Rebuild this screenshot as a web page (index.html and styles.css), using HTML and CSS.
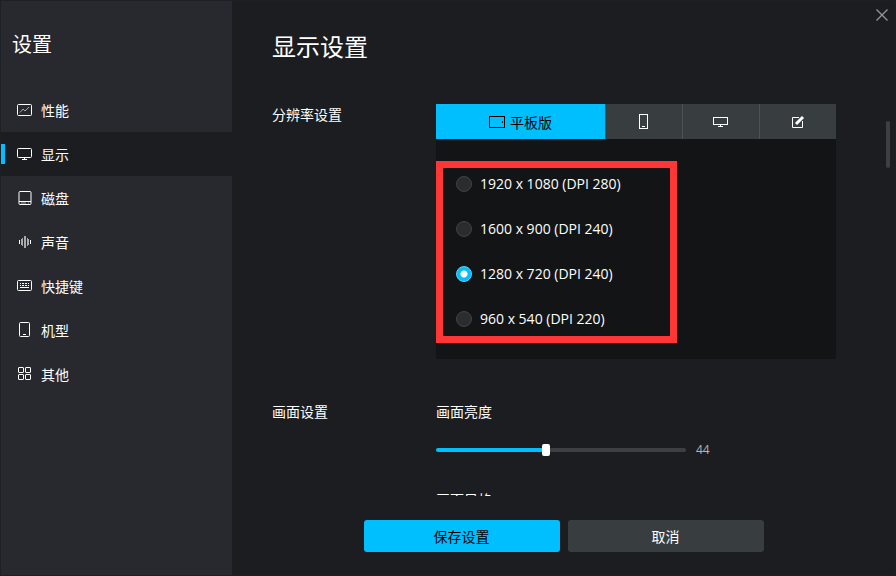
FILE: index.html
```html
<!DOCTYPE html>
<html lang="zh-CN">

<head>
    <meta charset="UTF-8">
    <meta name="viewport" content="width=device-width, initial-scale=1.0">
    <title>设置</title>
    <link rel="stylesheet" href="styles.css">
</head>

<body>
    <div class="window">
        <aside class="sidebar">
            <h1 class="sidebar-title">设置</h1>
            <nav class="menu">
                <a class="menu-item" href="#performance">
                    <svg class="icon" viewBox="0 0 16 16">
                        <rect x="0.5" y="2.5" width="14" height="11" rx="1" />
                        <path class="thin" d="M3 10.5L6 7l2 2 4-4" />
                    </svg>
                    <span>性能</span>
                </a>
                <a class="menu-item active" href="#display">
                    <svg class="icon" viewBox="0 0 16 16">
                        <rect x="0.5" y="2.5" width="14" height="9" rx="1" />
                        <path d="M7.5 12v1M5 13.5h5" />
                    </svg>
                    <span>显示</span>
                </a>
                <a class="menu-item" href="#disk">
                    <svg class="icon" viewBox="0 0 16 16">
                        <rect x="2" y="1.5" width="12" height="13" rx="1" />
                        <path d="M2 11.5h12" />
                        <path class="thin" d="M4 13h5M11 13h1" />
                    </svg>
                    <span>磁盘</span>
                </a>
                <a class="menu-item" href="#sound">
                    <svg class="icon" viewBox="0 0 16 16">
                        <path class="wave" d="M8 2v12" />
                        <path class="thin" d="M5.500 4v8M10.500 4v8M4.500 5v6M11.500 5v6" />
                        <path d="M2.500 6v4M13.500 6v4" />
                    </svg>
                    <span>声音</span>
                </a>
                <a class="menu-item" href="#shortcuts">
                    <svg class="icon" viewBox="0 0 16 16">
                        <rect x="0.5" y="2.5" width="14" height="10" rx="1" />
                        <path d="M3 5.5h1M5 5.5h2M8 5.5h2M11 5.5h1M3 7.5h1M5 7.5h2M8 7.5h2M11 7.5h1M3 9.5h9" />
                    </svg>
                    <span>快捷键</span>
                </a>
                <a class="menu-item" href="#model">
                    <svg class="icon" viewBox="0 0 16 16">
                        <rect x="2.5" y="0.5" width="10" height="14" rx="1" />
                        <path d="M6 12.5h3" />
                    </svg>
                    <span>机型</span>
                </a>
                <a class="menu-item" href="#other">
                    <svg class="icon" viewBox="0 0 16 16">
                        <rect x="1.5" y="1.5" width="5" height="5" rx="0.5" />
                        <rect x="8.5" y="1.5" width="5" height="5" rx="0.5" />
                        <rect x="1.5" y="8.5" width="5" height="5" rx="0.5" />
                        <rect x="8.5" y="8.5" width="5" height="5" rx="0.5" />
                    </svg>
                    <span>其他</span>
                </a>
            </nav>
        </aside>

        <main class="main">
            <button class="close" type="button" aria-label="关闭">
                <svg viewBox="0 0 12 12">
                    <path d="M0.5 0.5l11 11M11.5 0.5l-11 11" />
                </svg>
            </button>
            <div class="scrollbar"></div>

            <h2 class="main-title">显示设置</h2>

            <div class="content">
                <section class="setting">
                    <h3 class="label">分辨率设置</h3>
                    <div class="resolution">
                        <div class="tabs" role="tablist">
                            <button class="tab selected" type="button" role="tab" aria-selected="true">
                                <svg class="icon" viewBox="0 0 16 16">
                                    <rect x="0.5" y="2.5" width="15" height="11" />
                                    <path d="M13.5 7v2" />
                                </svg>
                                <span>平板版</span>
                            </button>
                            <button class="tab" type="button" role="tab" aria-label="手机版">
                                <svg class="icon" viewBox="0 0 16 16">
                                    <rect x="3.5" y="0.5" width="8" height="14" />
                                    <path d="M6 12.5h3" />
                                </svg>
                            </button>
                            <button class="tab" type="button" role="tab" aria-label="超宽屏">
                                <svg class="icon" viewBox="0 0 16 16">
                                    <rect x="0.5" y="3.5" width="14" height="7" />
                                    <path d="M7.5 11v2M5 12.5h5" />
                                </svg>
                            </button>
                            <button class="tab" type="button" role="tab" aria-label="自定义">
                                <svg class="icon" viewBox="0 0 16 16">
                                    <path d="M9 3.5H2.5v10h10V7" />
                                    <path class="pen" d="M6 10L13 3" />
                                </svg>
                            </button>
                        </div>
                        <div class="panel">
                            <div class="options" role="radiogroup" aria-label="分辨率">
                                <label class="option"><input type="radio" name="resolution"><span>1920 x 1080 (DPI 280)</span></label>
                                <label class="option"><input type="radio" name="resolution"><span>1600 x 900 (DPI 240)</span></label>
                                <label class="option"><input type="radio" name="resolution" checked><span>1280 x 720 (DPI 240)</span></label>
                                <label class="option"><input type="radio" name="resolution"><span>960 x 540 (DPI 220)</span></label>
                            </div>
                        </div>
                    </div>
                </section>

                <section class="setting">
                    <h3 class="label">画面设置</h3>
                    <div class="picture">
                        <label class="label" for="brightness">画面亮度</label>
                        <div class="slider">
                            <input id="brightness" type="range" min="0" max="100" value="44">
                            <output for="brightness">44</output>
                        </div>
                        <div class="label">画面风格</div>
                    </div>
                </section>
            </div>

            <div class="footer">
                <button class="btn save" type="button">保存设置</button>
                <button class="btn" type="button">取消</button>
            </div>
        </main>
    </div>

    <script>
        let brightness = document.querySelector("#brightness");
        let brightnessValue = document.querySelector(".slider output");

        brightness.addEventListener("input", (e) => {
            brightnessValue.textContent = e.target.value;
            e.target.style.setProperty("--value", e.target.value + "%");
        });
    </script>
</body>

</html>
```
FILE: styles.css
```css
* {
    box-sizing: border-box;
    padding: 0;
    margin: 0;
}

body {
    font-family: "Open Sans", "Noto Sans CJK SC", sans-serif;
    font-size: 14px;
    line-height: 22px;
    color: #fff;
    background-color: #1c1d20;
}

button,
input {
    font: inherit;
    color: inherit;
    border: none;
}

button {
    cursor: pointer;
}

.window {
    display: flex;
    height: 100vh;
    border: 1px solid #1b2026;
}

/* sidebar */
.sidebar {
    flex: none;
    width: 231px;
    background-color: #28292e;
}

.sidebar-title {
    padding: 28px 11px;
    font-size: 20px;
    font-weight: 400;
    line-height: 31px;
}

.menu-item {
    display: flex;
    align-items: center;
    gap: 8px;
    height: 44px;
    padding-left: 16px;
    color: #fff;
    text-decoration: none;
}

.menu-item span,
.tab span {
    padding-top: 2px;
}

.menu-item.active {
    padding-left: 0;
    background-color: #1c1d20;
}

.menu-item.active::before {
    content: "";
    width: 4px;
    height: 20px;
    margin-right: 4px;
    background-color: #00bfff;
}

.icon {
    flex: none;
    width: 16px;
    height: 16px;
    fill: none;
    stroke: currentColor;
}

.icon .thin {
    opacity: 0.6;
}

.icon .wave {
    stroke-width: 2;
    opacity: 0.6;
}

.icon .pen {
    stroke-width: 3;
}

/* main area */
.main {
    position: relative;
    flex: 1;
    min-width: 0;
    display: flex;
    flex-direction: column;
}

.close {
    position: absolute;
    top: 8px;
    right: 7px;
    width: 12px;
    height: 12px;
    background: none;
}

.close svg {
    display: block;
    fill: none;
    stroke: #96979a;
    stroke-width: 1.3;
}

.scrollbar {
    position: absolute;
    top: 120px;
    right: 5px;
    width: 4px;
    height: 47px;
    border-radius: 2px;
    background-color: #3e3f42;
}

.main-title {
    padding: 29px 40px 41px;
    font-size: 24px;
    font-weight: 400;
    line-height: 33px;
}

.content {
    flex: 1;
    min-height: 0;
    padding: 0 59px 0 40px;
    overflow-y: auto;
    scrollbar-width: none;
}

.setting {
    display: grid;
    grid-template-columns: 164px 1fr;
    margin-bottom: 42px;
}

.label {
    display: block;
    font-size: 14px;
    font-weight: 400;
}

.tabs {
    display: grid;
    grid-template-columns: 169fr 77fr 77fr 77fr;
    height: 35px;
}

.tab {
    display: flex;
    align-items: center;
    justify-content: center;
    gap: 5px;
    border-left: 1px solid #4e5255;
    background-color: #383d40;
}

.tab.selected {
    border-left: none;
    color: #000;
    background-color: #00bfff;
}

.panel {
    padding: 22px 0 16px;
    background-color: #131416;
}

.options {
    display: flex;
    flex-direction: column;
    gap: 13px;
    width: 241px;
    padding: 0 0 1px 13px;
    border: 7px solid #ff3636;
}

.option {
    display: flex;
    align-items: center;
    gap: 8px;
    height: 32px;
}

.option input {
    appearance: none;
    width: 16px;
    height: 16px;
    border: 1px solid #424346;
    border-radius: 50%;
    background-color: #2b2c2e;
}

.option input:checked {
    border-color: #5fd3fa;
    background: radial-gradient(circle, #fff 3px, #00bfff 4px);
}

.slider {
    display: flex;
    align-items: center;
    gap: 10px;
    height: 20px;
    margin: 17px 0 29px;
}

.slider input {
    --value: 44%;
    appearance: none;
    width: 250px;
    height: 4px;
    border-radius: 2px;
    background: linear-gradient(to right, #00bfff var(--value), #3e3f42 var(--value));
}

.slider input::-webkit-slider-thumb {
    appearance: none;
    width: 8px;
    height: 12px;
    border-radius: 2px;
    background-color: #fff;
}

.slider output {
    font-size: 12px;
    color: #b4b5b7;
}

.footer {
    display: flex;
    justify-content: center;
    gap: 8px;
    padding: 24px 0 23px;
}

.btn {
    width: 196px;
    height: 32px;
    padding-top: 2px;
    border-radius: 3px;
    background-color: #383d40;
}

.btn.save {
    color: #000;
    background-color: #00bfff;
}
```
